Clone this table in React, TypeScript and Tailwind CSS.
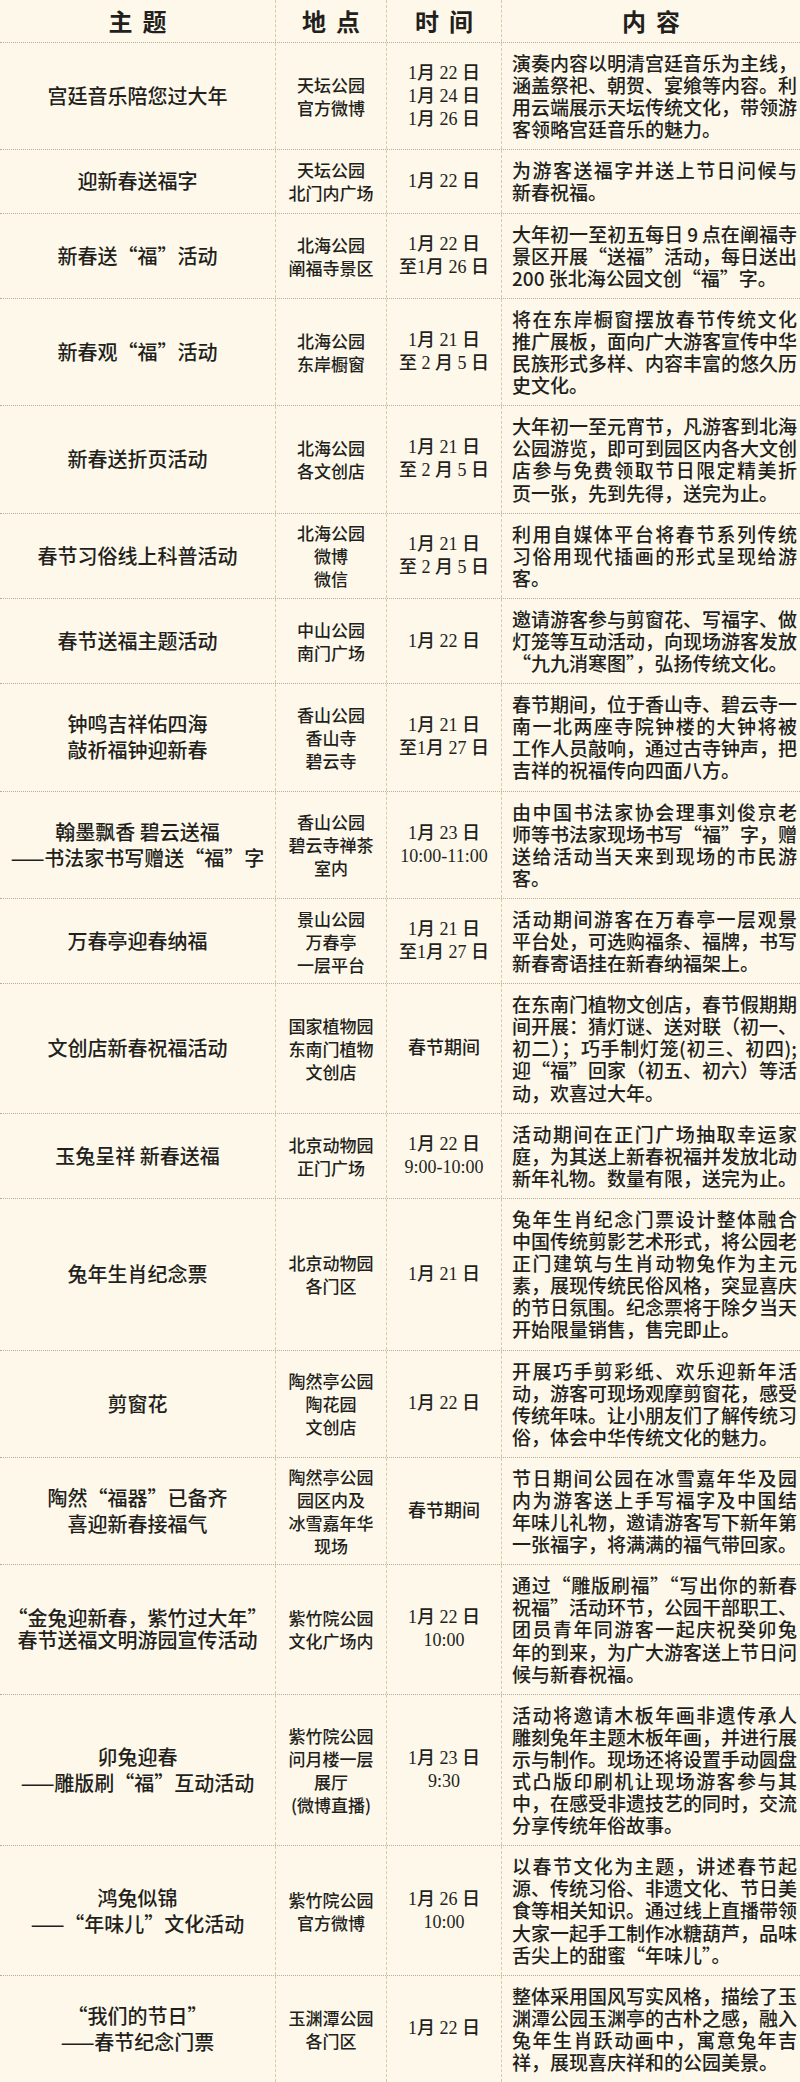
type Row = {
  theme: string[]
  place: string[]
  time: string[]
  content: string[]
  tight?: boolean
}

const rows: Row[] = [
  {
    theme: ["宫廷音乐陪您过大年"],
    place: ["天坛公园", "官方微博"],
    time: ["1月 22 日", "1月 24 日", "1月 26 日"],
    content: ["演奏内容以明清宫廷音乐为主线，", "涵盖祭祀、朝贺、宴飨等内容。利", "用云端展示天坛传统文化，带领游", "客领略宫廷音乐的魅力。"],
  },
  {
    theme: ["迎新春送福字"],
    place: ["天坛公园", "北门内广场"],
    time: ["1月 22 日"],
    content: ["为游客送福字并送上节日问候与", "新春祝福。"],
  },
  {
    theme: ["新春送“福”活动"],
    place: ["北海公园", "阐福寺景区"],
    time: ["1月 22 日", "至1月 26 日"],
    content: ["大年初一至初五每日\u20099\u2009点在阐福寺", "景区开展“送福”活动，每日送出", "200 张北海公园文创“福”字。"],
  },
  {
    theme: ["新春观“福”活动"],
    place: ["北海公园", "东岸橱窗"],
    time: ["1月 21 日", "至 2 月 5 日"],
    content: ["将在东岸橱窗摆放春节传统文化", "推广展板，面向广大游客宣传中华", "民族形式多样、内容丰富的悠久历", "史文化。"],
  },
  {
    theme: ["新春送折页活动"],
    place: ["北海公园", "各文创店"],
    time: ["1月 21 日", "至 2 月 5 日"],
    content: ["大年初一至元宵节，凡游客到北海", "公园游览，即可到园区内各大文创", "店参与免费领取节日限定精美折", "页一张，先到先得，送完为止。"],
  },
  {
    theme: ["春节习俗线上科普活动"],
    place: ["北海公园", "微博", "微信"],
    time: ["1月 21 日", "至 2 月 5 日"],
    content: ["利用自媒体平台将春节系列传统", "习俗用现代插画的形式呈现给游", "客。"],
  },
  {
    theme: ["春节送福主题活动"],
    place: ["中山公园", "南门广场"],
    time: ["1月 22 日"],
    content: ["邀请游客参与剪窗花、写福字、做", "灯笼等互动活动，向现场游客发放", "“九九消寒图”，弘扬传统文化。"],
  },
  {
    theme: ["钟鸣吉祥佑四海", "敲祈福钟迎新春"],
    place: ["香山公园", "香山寺", "碧云寺"],
    time: ["1月 21 日", "至1月 27 日"],
    content: ["春节期间，位于香山寺、碧云寺一", "南一北两座寺院钟楼的大钟将被", "工作人员敲响，通过古寺钟声，把", "吉祥的祝福传向四面八方。"],
  },
  {
    theme: ["翰墨飘香 碧云送福", "——书法家书写赠送“福”字"],
    place: ["香山公园", "碧云寺禅茶", "室内"],
    time: ["1月 23 日", "10:00-11:00"],
    content: ["由中国书法家协会理事刘俊京老", "师等书法家现场书写“福”字，赠", "送给活动当天来到现场的市民游", "客。"],
  },
  {
    theme: ["万春亭迎春纳福"],
    place: ["景山公园", "万春亭", "一层平台"],
    time: ["1月 21 日", "至1月 27 日"],
    content: ["活动期间游客在万春亭一层观景", "平台处，可选购福条、福牌，书写", "新春寄语挂在新春纳福架上。"],
  },
  {
    theme: ["文创店新春祝福活动"],
    place: ["国家植物园", "东南门植物", "文创店"],
    time: ["春节期间"],
    content: ["在东南门植物文创店，春节假期期", "间开展：猜灯谜、送对联（初一、", "初二）；巧手制灯笼(初三、初四);", "迎“福”回家（初五、初六）等活", "动，欢喜过大年。"],
  },
  {
    theme: ["玉兔呈祥 新春送福"],
    place: ["北京动物园", "正门广场"],
    time: ["1月 22 日", "9:00-10:00"],
    content: ["活动期间在正门广场抽取幸运家", "庭，为其送上新春祝福并发放北动", "新年礼物。数量有限，送完为止。"],
  },
  {
    theme: ["兔年生肖纪念票"],
    place: ["北京动物园", "各门区"],
    time: ["1月 21 日"],
    content: ["兔年生肖纪念门票设计整体融合", "中国传统剪影艺术形式，将公园老", "正门建筑与生肖动物兔作为主元", "素，展现传统民俗风格，突显喜庆", "的节日氛围。纪念票将于除夕当天", "开始限量销售，售完即止。"],
  },
  {
    theme: ["剪窗花"],
    place: ["陶然亭公园", "陶花园", "文创店"],
    time: ["1月 22 日"],
    content: ["开展巧手剪彩纸、欢乐迎新年活", "动，游客可现场观摩剪窗花，感受", "传统年味。让小朋友们了解传统习", "俗，体会中华传统文化的魅力。"],
  },
  {
    theme: ["陶然“福器”已备齐", "喜迎新春接福气"],
    place: ["陶然亭公园", "园区内及", "冰雪嘉年华", "现场"],
    time: ["春节期间"],
    content: ["节日期间公园在冰雪嘉年华及园", "内为游客送上手写福字及中国结", "年味儿礼物，邀请游客写下新年第", "一张福字，将满满的福气带回家。"],
  },
  {
    theme: ["“金兔迎新春，紫竹过大年”", "春节送福文明游园宣传活动"],
    place: ["紫竹院公园", "文化广场内"],
    time: ["1月 22 日", "10:00"],
    content: ["通过“雕版刷福”“写出你的新春", "祝福”活动环节，公园干部职工、", "团员青年同游客一起庆祝癸卯兔", "年的到来，为广大游客送上节日问", "候与新春祝福。"],
    tight: true,
  },
  {
    theme: ["卯兔迎春", "——雕版刷“福”互动活动"],
    place: ["紫竹院公园", "问月楼一层", "展厅", "(微博直播)"],
    time: ["1月 23 日", "9:30"],
    content: ["活动将邀请木板年画非遗传承人", "雕刻兔年主题木板年画，并进行展", "示与制作。现场还将设置手动圆盘", "式凸版印刷机让现场游客参与其", "中，在感受非遗技艺的同时，交流", "分享传统年俗故事。"],
  },
  {
    theme: ["鸿兔似锦", "——“年味儿”文化活动"],
    place: ["紫竹院公园", "官方微博"],
    time: ["1月 26 日", "10:00"],
    content: ["以春节文化为主题，讲述春节起", "源、传统习俗、非遗文化、节日美", "食等相关知识。通过线上直播带领", "大家一起手工制作冰糖葫芦，品味", "舌尖上的甜蜜“年味儿”。"],
  },
  {
    theme: ["“我们的节日”", "——春节纪念门票"],
    place: ["玉渊潭公园", "各门区"],
    time: ["1月 22 日"],
    content: ["整体采用国风写实风格，描绘了玉", "渊潭公园玉渊亭的古朴之感，融入", "兔年生肖跃动画中，寓意兔年吉", "祥，展现喜庆祥和的公园美景。"],
  },
]

const grid = "grid grid-cols-[276px_111px_115px_minmax(0,1fr)]"
const cell = "flex min-w-0 flex-col items-center justify-center border-r border-dashed border-[#d9cba9]"

function Header() {
  const heads = ["主题", "地点", "时间"]
  return (
    <div className={`${grid} h-[43px] border-b border-dotted border-[#b9ae98] text-[24px] font-bold tracking-[10px]`}>
      {heads.map((h) => (
        <div key={h} className={cell}>
          <span className="pl-[10px]">{h}</span>
        </div>
      ))}
      <div className="flex items-center justify-center">
        <span className="pl-[10px]">内容</span>
      </div>
    </div>
  )
}

function TableRow({ row, last }: { row: Row; last: boolean }) {
  return (
    <div className={`${grid} ${last ? "" : "border-b border-dotted border-[#b9ae98]"}`}>
      <div className={`${cell} text-[20px] ${row.tight ? "leading-[22px]" : "leading-[26px]"}`}>
        {row.theme.map((t) => (
          <div key={t} className="whitespace-nowrap">{t}</div>
        ))}
      </div>
      <div className={`${cell} text-[17px] leading-[23px]`}>
        {row.place.map((p) => (
          <div key={p} className="whitespace-nowrap">{p}</div>
        ))}
      </div>
      <div className={`${cell} text-[18px] leading-[23px] font-['Liberation_Serif','Noto_Sans_CJK_SC',serif]`}>
        {row.time.map((t) => (
          <div key={t} className="whitespace-nowrap">{t}</div>
        ))}
      </div>
      <div className="min-w-0 py-[9px] pl-[10px] pr-[3px] text-[19px] leading-[22.1px]">
        {row.content.map((line, i) => (
          <div
            key={i}
            className={`whitespace-nowrap ${i < row.content.length - 1 ? "text-justify [text-align-last:justify]" : ""}`}
          >
            {line}
          </div>
        ))}
      </div>
    </div>
  )
}

export default function App() {
  return (
    <div className="min-h-[2082px] w-[800px] bg-[#fdf8ea] font-['Noto_Sans_CJK_SC','Liberation_Serif',serif] font-medium text-[#231f1c]">
      <Header />
      {rows.map((row, i) => (
        <TableRow key={i} row={row} last={i === rows.length - 1} />
      ))}
    </div>
  )
}
